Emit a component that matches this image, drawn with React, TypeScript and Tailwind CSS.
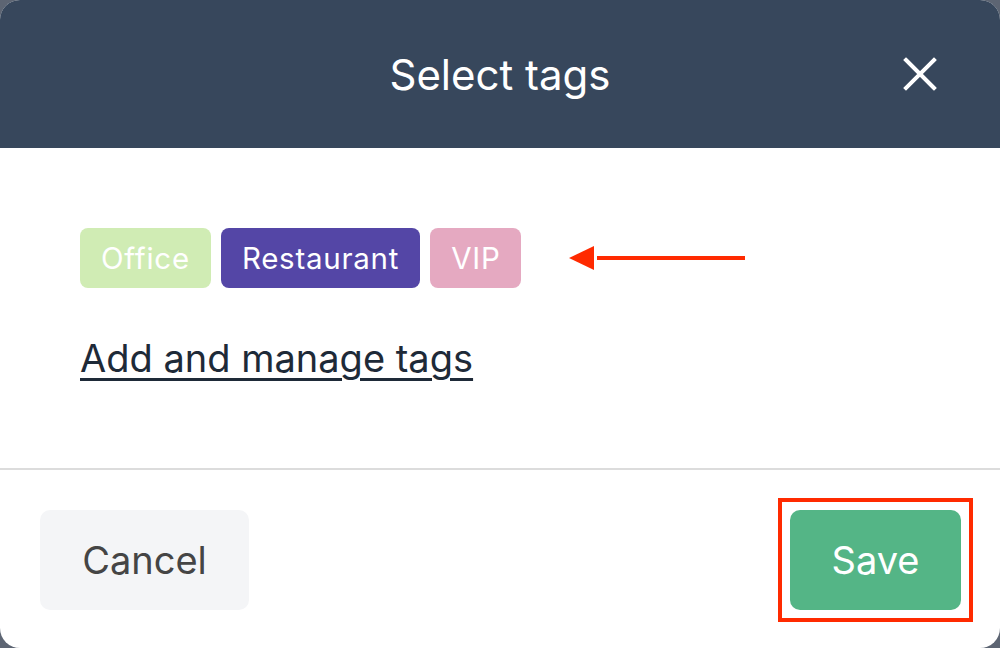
import React from 'react';

const tags = [
  { id: 'office', name: 'Office', className: 'bg-[#d0ecb4]' },
  { id: 'restaurant', name: 'Restaurant', className: 'bg-[#5446a6]' },
  { id: 'vip', name: 'VIP', className: 'bg-[#e5a9c1]' },
];

const App: React.FC = () => {
  return (
    <div className="w-[1000px] h-[648px] bg-[#5d6573] font-['Inter','Noto_Sans',sans-serif]">
      <div className="w-full h-full bg-white rounded-[20px] overflow-hidden flex flex-col">
        {/* Header */}
        <div className="h-[148px] shrink-0 bg-[#37475c] text-white relative flex items-center justify-center">
          <h1 className="text-[42px] font-normal">Select tags</h1>
          <button className="absolute right-[62px] top-[56px] w-9 h-9 flex items-center justify-center">
            <svg width="34" height="34" viewBox="0 0 34 34">
              <path d="M3 3 L31 31 M31 3 L3 31" stroke="white" strokeWidth="4" strokeLinecap="square" />
            </svg>
          </button>
        </div>

        {/* Body */}
        <div className="h-[322px] shrink-0 px-20 pt-20 border-b-2 border-[#dcdcdc]">
          <div className="flex items-center">
            <div className="flex gap-[10px]">
              {tags.map(tag => (
                <span
                  key={tag.id}
                  className={`h-[60px] px-[21px] flex items-center rounded-lg text-white text-[29.5px] tracking-wide ${tag.className}`}
                >
                  {tag.name}
                </span>
              ))}
            </div>
            <svg className="ml-[48px]" width="180" height="30" viewBox="0 0 180 30">
              <path d="M28 15 H176" stroke="#ff2a00" strokeWidth="4" />
              <path d="M0 15 L25 3 L25 27 Z" fill="#ff2a00" />
            </svg>
          </div>
          <a href="#" className="inline-block mt-[42px] text-[38px] text-[#1e2a38] underline decoration-[3px] underline-offset-[6px]">
            Add and manage tags
          </a>
        </div>

        {/* Footer */}
        <div className="flex-1 flex items-center justify-between px-10 pt-[2px]">
          <button className="w-[209px] h-[100px] rounded-[10px] bg-[#f4f5f7] text-[#454545] text-[38px]">
            Cancel
          </button>
          <div className="border-4 border-[#ff2a00] p-2 -mr-[13px]">
            <button className="w-[171px] h-[100px] rounded-[10px] bg-[#54b586] text-white text-[38px]">
              Save
            </button>
          </div>
        </div>
      </div>
    </div>
  );
};

export default App;
